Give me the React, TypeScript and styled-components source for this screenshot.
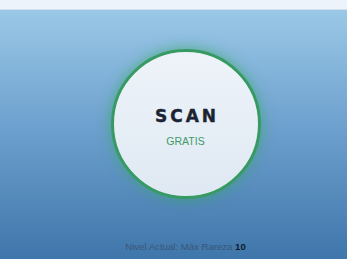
import styled, { createGlobalStyle } from 'styled-components';

const GlobalStyle = createGlobalStyle`
  html, body {
    margin: 0;
    padding: 0;
    width: 347px;
    height: 259px;
    overflow: hidden;
    font-family: "Liberation Sans", Arial, sans-serif;
  }
`;

const Page = styled.div`
  width: 347px;
  height: 259px;
  display: flex;
  flex-direction: column;
`;

const TopBar = styled.header`
  height: 9px;
  background: #edf3fa;
  border-bottom: 1px solid #d3e0ec;
  flex-shrink: 0;
`;

const Stage = styled.main`
  flex: 1;
  display: flex;
  flex-direction: column;
  align-items: center;
  padding-left: 24px;
  background: linear-gradient(180deg, #9ac8e6 0%, #6fa2cf 45%, #3f76ab 100%);
`;

const ScanButton = styled.button`
  margin-top: 39px;
  width: 150px;
  height: 150px;
  border-radius: 50%;
  border: 3px solid #379a63;
  box-sizing: border-box;
  background: linear-gradient(180deg, #eef3f9 0%, #dfe9f3 100%);
  box-shadow: 0 0 12px 2px rgba(52, 170, 100, 0.55);
  display: flex;
  flex-direction: column;
  align-items: center;
  justify-content: center;
  gap: 11px;
  padding: 6px 0 0;
  cursor: pointer;
  font-family: inherit;
`;

const ScanLabel = styled.span`
  font-family: "DejaVu Sans", "Liberation Sans", sans-serif;
  font-size: 17px;
  font-weight: 700;
  letter-spacing: 3px;
  margin-right: -3px;
  color: #1b2433;
  -webkit-text-stroke: 0.4px #1b2433;
  line-height: 1;
`;

const FreeLabel = styled.span`
  font-size: 10.5px;
  color: #3f9a68;
  line-height: 1;
`;

const LevelInfo = styled.p`
  margin: 42px 0 0;
  font-size: 9.6px;
  line-height: 12px;
  color: #3a5676;
`;

const LevelValue = styled.strong`
  color: #111b29;
  font-weight: 700;
`;

export default function App() {
  return (
    <Page>
      <GlobalStyle />
      <TopBar />
      <Stage>
        <ScanButton type="button">
          <ScanLabel>SCAN</ScanLabel>
          <FreeLabel>GRATIS</FreeLabel>
        </ScanButton>
        <LevelInfo>
          Nivel Actual: Máx Rareza <LevelValue>10</LevelValue>
        </LevelInfo>
      </Stage>
    </Page>
  );
}
